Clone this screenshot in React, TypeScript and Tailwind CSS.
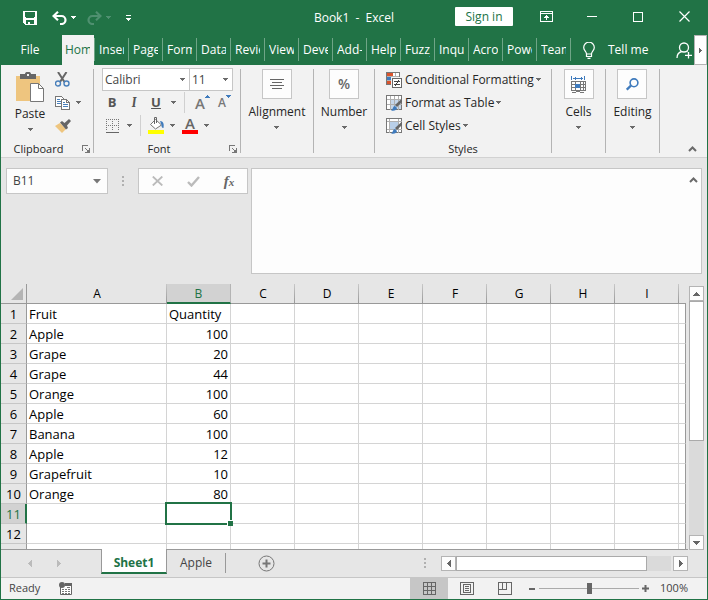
import React, { useState } from "react";

const FONT = "font-['Open_Sans','Noto_Sans',sans-serif]";

function Caret({ className = "text-[#6a6a6a]" }: { className?: string }) {
  return (
    <svg width="5" height="3" viewBox="0 0 5 3" className={`shrink-0 ${className}`} fill="currentColor" shapeRendering="crispEdges">
      <path d="M0 0h5v1H4v1H3v1H2V2H1V1H0z" />
    </svg>
  );
}

function Chevron() {
  return (
    <svg width="9" height="6" viewBox="0 0 9 6" fill="none" stroke="#6a6a6a" strokeWidth="2">
      <path d="M1 5l3.500-3.500L8 5" />
    </svg>
  );
}

function Launcher({ label }: { label: string }) {
  return (
    <button aria-label={label} className="absolute right-[3px] bottom-0">
      <svg width="8" height="8" viewBox="0 0 8 8" fill="none" stroke="#777" shapeRendering="crispEdges">
        <path d="M.5 6V.5H6M7.500 3v4.500H3M3 3l4 4" />
        <path d="M7 4v3H4z" fill="#777" stroke="none" />
      </svg>
    </button>
  );
}

/* ---------- Title bar ---------- */

function TitleBar() {
  return (
    <header className="grid h-[35px] grid-cols-[1fr_auto_1fr] items-center text-white">
      <div className="flex items-center pl-[22px]">
        <button aria-label="Save" className="mr-[15px]">
          <svg width="14" height="14" viewBox="0 0 14 14" shapeRendering="crispEdges">
            <path fillRule="evenodd" fill="#fff" d="M0 0h14v14H2l-2-2zM2 1v5h1v1h8V6h1V1zM3 9v4h2v-2h2v2h4V9z" />
          </svg>
        </button>
        <button aria-label="Undo">
          <svg width="15" height="14" viewBox="0 0 15 14" fill="none" stroke="#fff" strokeWidth="2.200">
            <path d="M6 .8L1.500 5 6 9.200M2 5h7.500a4 4 0 010 8H8" />
          </svg>
        </button>
        <button aria-label="Undo history" className="ml-1 mr-[11px]"><Caret className="text-white" /></button>
        <button aria-label="Redo">
          <svg width="15" height="14" viewBox="0 0 15 14" fill="none" stroke="#4f9070" strokeWidth="2.200">
            <path d="M9 .8L13.500 5 9 9.200M13 5H5.500a4 4 0 000 8H7" />
          </svg>
        </button>
        <button aria-label="Redo history" className="ml-1 mr-[15px]"><Caret className="text-[#4f9070]" /></button>
        <button aria-label="Customize toolbar" className="flex flex-col items-center gap-0.5">
          <span className="h-px w-[5px] bg-white" />
          <Caret className="text-white" />
        </button>
      </div>
      <h1 className="whitespace-pre text-xs">{"Book1  -  Excel"}</h1>
      <div className="flex h-full items-center justify-end pb-0.5">
        <button className="mr-[10px] h-[19px] w-[58px] rounded-[1px] bg-white text-xs leading-5 text-[#217346]">Sign in</button>
        <button aria-label="Ribbon display options" className="flex w-[46px] justify-center">
          <svg width="13" height="11" viewBox="0 0 13 11" fill="none" stroke="#fff" shapeRendering="crispEdges">
            <path d="M.5.5h12v10H.5zM.5 2.500h12M6.500 4v5" />
            <path d="M4 6h1V5h1V4h1v1h1v1h1v1H4z" fill="#fff" stroke="none" />
          </svg>
        </button>
        <button aria-label="Minimize" className="flex w-[46px] justify-center"><span className="h-px w-2.5 bg-white" /></button>
        <button aria-label="Maximize" className="flex w-[46px] justify-center"><span className="size-2.5 border border-white" /></button>
        <button aria-label="Close" className="flex w-[46px] justify-center">
          <svg width="11" height="11" viewBox="0 0 11 11" stroke="#fff" strokeWidth="1.200"><path d="M.5.5l10 10M10.500.5l-10 10" /></svg>
        </button>
      </div>
    </header>
  );
}

/* ---------- Ribbon tabs ---------- */

const TABS = ["Inser", "Page", "Form", "Data", "Revie", "View", "Deve", "Add-", "Help", "Fuzzy", "Inqu", "Acro", "Powe", "Team"];

function RibbonTabs() {
  return (
    <nav className="flex h-[30px] text-xs text-white">
      <button className="w-[61px] pr-[3px]">File</button>
      <button className="flex w-8 shrink-0 items-center bg-[#f2f2f2] px-[3px] text-[#217346]">
        <span className="w-[25px] overflow-hidden text-left">Hom</span>
      </button>
      <span className="mt-[3px] h-[23px] w-px bg-[#6fa587]" />
      {TABS.map((t) => (
        <button key={t} className="mt-[3px] flex h-[23px] w-[34px] shrink-0 items-center border-r border-[#6fa587] px-1 pt-px">
          <span className="w-[26px] overflow-hidden text-left whitespace-nowrap">{t}</span>
        </button>
      ))}
      <button className="ml-3 flex items-center gap-[13px]">
        <svg width="12" height="17" viewBox="0 0 12 17" fill="none" stroke="#fff" strokeWidth="1.200">
          <path d="M3.500 12c0-2.500-2.800-3.300-2.800-6.500a5.300 5.300 0 0110.600 0c0 3.200-2.800 4-2.800 6.500zM3.500 12v2.500h5V12M4.500 16.300h3" />
        </svg>
        <span className="whitespace-nowrap">Tell me</span>
      </button>
      <button aria-label="Share" className="mr-0.5 ml-auto">
        <svg width="16" height="17" viewBox="0 0 16 17" fill="none" stroke="#fff" strokeWidth="1.300">
          <circle cx="8" cy="5.500" r="4.500" />
          <path d="M1 16c0-3.500 2-5.800 4.800-6.500M10.500 9.300l1 .7M12.500 10v6.500M9 13.300h7" />
        </svg>
      </button>
      <button aria-label="Scroll tabs" className="flex w-[13px] items-center justify-center border border-[#b4b4b4] bg-white">
        <svg width="3" height="5" viewBox="0 0 3 5" fill="#666" shapeRendering="crispEdges"><path d="M0 0h1v1h1v1h1v1H2v1H1v1H0z" /></svg>
      </button>
    </nav>
  );
}

/* ---------- Ribbon ---------- */

const GROUP = "relative flex shrink-0 flex-col border-r border-[#b4b4b4]";
const GROUP_LABEL = "absolute inset-x-0 bottom-[-4px] h-4 text-center text-[11px] leading-4";

function BigGroup({ label, width, children }: { label: string; width: string; children: React.ReactNode }) {
  return (
    <section className={`${GROUP} ${width} items-center`}>
      <button className="flex flex-col items-center">
        <span className="flex size-[30px] items-center justify-center border border-[#c6c6c6] bg-[#fdfdfd]">{children}</span>
        <span className="mt-[5px] mb-[6px] leading-4">{label}</span>
        <Caret />
      </button>
    </section>
  );
}

function BrushOverlay() {
  return (
    <g>
      <path d="M16 3.500V7l-5 5-2-2z" fill="#666" />
      <path d="M5 15.500c2-.5 1.500-4 4-4.500l2 2c0 2-3 3.500-6 2.500z" fill="#3f7bbd" />
    </g>
  );
}

function GridBrush({ header }: { header: boolean }) {
  return (
    <svg width="17" height="16" viewBox="0 0 17 16">
      <path d="M.5.5h15v14H.5z" fill="#fff" stroke="#777" shapeRendering="crispEdges" />
      {header ? <path d="M4 4h8v7H4z" fill="#b9cfe8" /> : <path d="M4 5h11v9H4z" fill="#c5d6ea" />}
      <path d={header ? "M.5 3.500h15M.5 11.500h15M3.500.5v14M12.500.5v14" : "M.5 4.500h15M.5 9.500h15M4.500.5v14M8.500.5v14M12.500.5v14"} stroke="#b0b0b0" fill="none" shapeRendering="crispEdges" />
      <BrushOverlay />
    </svg>
  );
}

function ConditionalIcon() {
  return (
    <svg width="17" height="16" viewBox="0 0 17 16" shapeRendering="crispEdges">
      <path d="M.5.5h13v12H.5z" fill="#fff" stroke="#777" />
      <path d="M1 1h6v3H1zM1 9h4v3H1z" fill="#d9532c" />
      <path d="M1 5h8v3H1z" fill="#3f7bbd" />
      <path d="M1 4.500h12M1 8.500h12M9.500 1v6" stroke="#b0b0b0" />
      <path d="M5 5h12v11H5z" fill="#f2f2f2" />
      <path d="M6.500 6.500h9v9h-9z" fill="#fff" stroke="#666" />
      <path d="M8 9.500h6M8 12.500h6M12.500 8l-3 6" stroke="#444" />
    </svg>
  );
}

function StyleRow({ label, children }: { label: string; children: React.ReactNode }) {
  return (
    <button className="flex h-[23px] items-center whitespace-nowrap">
      {children}
      <span className="mr-0.5 ml-0.5">{label}</span>
      <Caret />
    </button>
  );
}

function Ribbon() {
  return (
    <div className="flex h-[93px] border-b border-[#d2d2d2] bg-[#f2f2f2] py-1 text-xs text-[#262626]">
      <section className={`${GROUP} w-[93px]`}>
        <div className="-mt-px flex">
          <button className="mt-1 flex w-[54px] flex-col items-center pl-1">
            <svg width="30" height="31" viewBox="0 0 30 31">
              <path d="M1 4h24v25H1z" fill="#eec57f" />
              <path d="M5 2h5c0-3 6-3 6 0h5v5H5z" fill="#666" />
              <path d="M12 2h2v2h-2z" fill="#f2f2f2" />
              <path d="M15.500 11.500h8l5 5v13h-13z" fill="#fff" stroke="#777" />
              <path d="M23.500 11.500v5h5" fill="none" stroke="#777" />
            </svg>
            <span className="mt-[3px] mb-[6px] leading-4">Paste</span>
            <Caret />
          </button>
          <div className="flex flex-col">
            <button aria-label="Cut" className="flex h-[23px] items-center">
              <svg width="15" height="15" viewBox="0 0 15 15" fill="none">
                <path d="M3 0l6.500 10M11.500 0L5 10" stroke="#666" strokeWidth="2" />
                <circle cx="3" cy="11.500" r="2.500" stroke="#4a80bb" strokeWidth="1.400" />
                <circle cx="11.500" cy="11.500" r="2.500" stroke="#4a80bb" strokeWidth="1.400" />
              </svg>
            </button>
            <button aria-label="Copy" className="flex h-[23px] items-center gap-[6px]">
              <svg width="15" height="14" viewBox="0 0 15 14" fill="#fff" stroke="#777" shapeRendering="crispEdges">
                <path d="M.5.5h6l2 2v8h-8z" />
                <path d="M2 3.500h3M2 5.500h4M2 7.500h4" stroke="#4a80bb" />
                <path d="M6.500 3.500h5l3 3v7h-8z" />
                <path d="M11.500 3.500v3h3" fill="none" />
                <path d="M8 6.500h2M8 8.500h5M8 10.500h5" stroke="#4a80bb" />
              </svg>
              <Caret />
            </button>
            <button aria-label="Format painter" className="flex h-[23px] items-center">
              <svg width="16" height="14" viewBox="0 0 16 14">
                <path d="M0 7l5-3 6 6-4 4z" fill="#eec57f" />
                <path d="M5 3.500l2-1.500 2.500 2L14 0l2 2-4 4.500L13 9l-2 1.500z" fill="#666" />
              </svg>
            </button>
          </div>
        </div>
        <h2 className={`${GROUP_LABEL} pr-[17px]`}>Clipboard</h2>
        <Launcher label="Clipboard settings" />
      </section>

      <section className={`${GROUP} w-[147px] pl-2`}>
        <div className="-mt-px flex">
          <label className="relative flex items-center">
            <select aria-label="Font" className="h-[23px] w-[88px] appearance-none border border-[#c6c6c6] bg-white pl-0.5 text-[#444]"><option>Calibri</option></select>
            <span className="pointer-events-none absolute right-[5px]"><Caret /></span>
          </label>
          <label className="relative flex items-center">
            <select aria-label="Font size" className="h-[23px] w-[43px] appearance-none border border-l-0 border-[#c6c6c6] bg-white pl-0.5 text-[#444]"><option>11</option></select>
            <span className="pointer-events-none absolute right-[5px]"><Caret /></span>
          </label>
        </div>
        <div className="flex h-[23px] items-center text-[13px] text-[#555]">
          <button aria-label="Bold" className="w-5 font-bold">B</button>
          <button aria-label="Italic" className="ml-[2px] w-5 font-serif font-bold italic">I</button>
          <button aria-label="Underline" className="w-6 font-bold underline">U</button>
          <button aria-label="Underline style" className="ml-[3px]"><Caret /></button>
          <span className="ml-2 h-[21px] w-px bg-[#d0d0d0]" />
          <button aria-label="Increase font size" className="ml-2.5 flex items-start text-[15px] leading-4 font-semibold text-[#777]">
            A<svg width="5" height="3" viewBox="0 0 5 3" fill="#3f7bbd" shapeRendering="crispEdges"><path d="M2 0h1v1h1v1h1v1H0V2h1V1h1z" /></svg>
          </button>
          <button aria-label="Decrease font size" className="ml-2 flex items-start text-[12px] leading-4 font-semibold text-[#777]">
            A<Caret className="text-[#3f7bbd]" />
          </button>
        </div>
        <div className="flex h-[23px] items-center text-[#555]">
          <button aria-label="Borders" className="ml-1">
            <svg width="13" height="14" viewBox="0 0 13 14" fill="none" stroke="#777" shapeRendering="crispEdges">
              <path d="M.5 0v12M6.500 0v12M12.500 0v12M0 .5h13M0 6.500h13" strokeDasharray="1 1" />
              <path d="M0 13h13" stroke="#666" />
            </svg>
          </button>
          <button aria-label="Border style" className="ml-2"><Caret /></button>
          <span className="ml-2 h-[21px] w-px bg-[#d0d0d0]" />
          <button aria-label="Fill color" className="ml-[7px]">
            <svg width="17" height="17" viewBox="0 0 17 17">
              <path d="M7.500 2.500l6 5.500-6 4-5-4.500z" fill="#fff" stroke="#777" />
              <path d="M6.500 7V.5h2V6" fill="none" stroke="#666" />
              <path d="M12 4c4 0 4 4 3.500 7-2 0-2-2-2-3z" fill="#3f7bbd" />
              <path d="M0 13h16v4H0z" fill="#ff0" />
            </svg>
          </button>
          <button aria-label="Fill color list" className="ml-[5px]"><Caret /></button>
          <button aria-label="Font color" className="ml-[7px] flex w-4 flex-col items-center border-b-4 border-[#f00] text-[15px] leading-[13px] font-semibold text-[#666]">A</button>
          <button aria-label="Font color list" className="ml-[6px]"><Caret /></button>
        </div>
        <h2 className={`${GROUP_LABEL} pr-4`}>Font</h2>
        <Launcher label="Font settings" />
      </section>

      <BigGroup label="Alignment" width="w-[73px]">
        <svg width="14" height="11" viewBox="0 0 14 11" stroke="#666" shapeRendering="crispEdges"><path d="M0 .5h14M2 3.500h10M0 6.500h14M2 9.500h10" /></svg>
      </BigGroup>
      <BigGroup label="Number" width="w-[61px]">
        <span className="text-sm font-semibold text-[#666]">%</span>
      </BigGroup>

      <section className={`${GROUP} w-[177px] pl-[11px]`}>
        <div className="-mt-px flex flex-col items-start">
          <StyleRow label="Conditional Formatting"><ConditionalIcon /></StyleRow>
          <StyleRow label="Format as Table"><GridBrush header={false} /></StyleRow>
          <StyleRow label="Cell Styles"><GridBrush header /></StyleRow>
        </div>
        <h2 className={GROUP_LABEL}>Styles</h2>
      </section>

      <BigGroup label="Cells" width="w-[54px]">
        <svg width="15" height="17" viewBox="0 0 15 17" fill="none" shapeRendering="crispEdges">
          <path d="M.5 0v4M13.500 0v4M2 2h10M4 .5v3M10 .5v3" stroke="#3f7bbd" />
          <path d="M.5 5.500h14v9H.5zM.5 8.500h14M.5 11.500h14M4.500 5v10M9.500 5v10M12.500 5v10" stroke="#777" />
          <path d="M4 8h5v4H4z" fill="#3f7bbd" />
          <path d="M1 16h4l2-1 2 1h4" stroke="#777" />
        </svg>
      </BigGroup>
      <BigGroup label="Editing" width="w-[54px]">
        <svg width="13" height="13" viewBox="0 0 13 13" fill="none" stroke="#3f7bbd">
          <circle cx="8" cy="4.800" r="3.900" strokeWidth="1.600" />
          <path d="M5 7.500L.8 11.700" strokeWidth="2.400" />
        </svg>
      </BigGroup>
      <button aria-label="Collapse ribbon" className="mr-2.5 mb-px ml-auto self-end"><Chevron /></button>
    </div>
  );
}

/* ---------- Formula bar ---------- */

function Dots() {
  return (
    <span className="flex flex-col gap-0.5">
      <i className="size-0.5 bg-[#b0b0b0]" />
      <i className="size-0.5 bg-[#b0b0b0]" />
      <i className="size-0.5 bg-[#b0b0b0]" />
    </span>
  );
}

function FormulaBar() {
  const [cell, setCell] = useState("B11");
  return (
    <div className="flex items-start px-[5px] py-2.5">
      <div className="flex h-[26px] w-[102px] shrink-0 items-center border border-[#c6c6c6] bg-[#fdfdfd]">
        <input aria-label="Name box" value={cell} onChange={(e) => setCell(e.target.value)} className="w-20 min-w-0 flex-1 bg-transparent pl-1.5 text-xs text-[#444] outline-none" />
        <button aria-label="Named cells" className="mr-1.5">
          <svg width="8" height="5" viewBox="0 0 8 5" fill="#777"><path d="M0 0h8L4 4.500z" /></svg>
        </button>
      </div>
      <div className="ml-[14px] flex h-[26px] items-center"><Dots /></div>
      <div className="ml-[14px] flex h-[26px] w-[110px] shrink-0 items-center border border-[#c6c6c6] bg-[#fdfdfd]">
        <button aria-label="Cancel" className="flex w-9 justify-center">
          <svg width="11" height="10" viewBox="0 0 11 10" stroke="#bbb" strokeWidth="1.800"><path d="M.8.5l9.500 9M10.300.5l-9.500 9" /></svg>
        </button>
        <button aria-label="Enter" className="flex w-9 justify-center">
          <svg width="13" height="11" viewBox="0 0 13 11" stroke="#bbb" strokeWidth="2.400" fill="none"><path d="M1 6l3.500 3.500L12 1" /></svg>
        </button>
        <button aria-label="Insert function" className="w-9 font-['Liberation_Serif',serif] text-[15px] leading-5 font-bold text-[#666] italic">
          f<span className="text-[11px]">x</span>
        </button>
      </div>
      <div className="relative ml-[3px] flex flex-1">
        <textarea aria-label="Formula" className="h-[106px] w-full resize-none border border-[#c6c6c6] bg-[#fdfdfd] p-1 pr-5 text-xs outline-none" />
        <button aria-label="Collapse formula bar" className="absolute top-[9px] right-1"><Chevron /></button>
      </div>
    </div>
  );
}

/* ---------- Sheet ---------- */

const COLUMNS = ["A", "B", "C", "D", "E", "F", "G", "H", "I", ""];
const DATA: [string, string | number][] = [
  ["Fruit", "Quantity"],
  ["Apple", 100],
  ["Grape", 20],
  ["Grape", 44],
  ["Orange", 100],
  ["Apple", 60],
  ["Banana", 100],
  ["Apple", 12],
  ["Grapefruit", 10],
  ["Orange", 80],
];

function Sheet() {
  return (
    <div className="min-w-0 flex-1 overflow-hidden">
      <table className="w-full table-fixed border-separate border-spacing-0 text-[13px] leading-[17px] text-black">
        <colgroup>
          <col className="w-[26px]" />
          <col className="w-[140px]" />
          {COLUMNS.slice(1, -1).map((c) => <col key={c} className="w-16" />)}
          <col />
        </colgroup>
        <thead>
          <tr className="h-5 text-xs">
            <td className="border-r border-b border-[#999] p-0">
              <svg width="12" height="12" viewBox="0 0 12 12" fill="#b4b4b4" className="mr-[3px] ml-auto"><path d="M12 0v12H0z" /></svg>
            </td>
            {COLUMNS.map((c) =>
              c === "B" ? (
                <th key={c} className="border-r border-b-2 border-r-[#b4b4b4] border-b-[#217346] bg-[#d2d2d2] p-0 pt-px leading-[17px] font-normal text-[#217346]">{c}</th>
              ) : (
                <th key={c} className={`border-b border-[#999] p-0 font-normal ${c ? "bg-linear-to-b from-[#c8c8c8] to-[#999] bg-[length:1px_100%] bg-right bg-no-repeat" : ""}`}>{c}</th>
              )
            )}
          </tr>
        </thead>
        <tbody>
          {Array.from({ length: 13 }, (_, i) => i + 1).map((row) => (
            <tr key={row} className="h-5">
              <th className={row === 11
                ? "border-r-2 border-b border-r-[#217346] border-b-[#c6c6c6] bg-[#d2d2d2] p-0 pt-0.5 pl-px font-normal text-[#217346]"
                : "border-r border-b border-r-[#999] border-b-[#c6c6c6] bg-[#e6e6e6] p-0 pt-0.5 font-normal"}>{row <= 12 ? row : ""}</th>
              {COLUMNS.map((c, ci) => {
                const value = ci < 2 && DATA[row - 1] ? DATA[row - 1][ci] : "";
                return (
                  <td key={c} className={`border-r border-b border-b-[#d4d4d4] bg-white px-0.5 pt-0.5 pb-0 ${c ? "border-r-[#d4d4d4]" : "border-r-[#999]"} ${typeof value === "number" ? "text-right" : ""} ${row === 11 && c === "B" ? "relative" : ""}`}>
                    {value}
                    {row === 11 && c === "B" && (
                      <span className="absolute -inset-0.5 border-2 border-[#217346]">
                        <i className="absolute -right-[3px] -bottom-[3px] size-1.5 border-t border-l border-white bg-[#217346]" />
                      </span>
                    )}
                  </td>
                );
              })}
            </tr>
          ))}
        </tbody>
      </table>
    </div>
  );
}

const SCROLL_BUTTON = "flex size-[15px] shrink-0 items-center justify-center border border-[#b4b4b4] bg-[#fdfdfd]";

function VerticalScroll() {
  return (
    <div className="z-10 mx-[3px] mt-0.5 -mb-px flex w-[15px] flex-col bg-[#dadada]">
      <button aria-label="Scroll up" className={SCROLL_BUTTON}>
        <svg width="7" height="4" viewBox="0 0 7 4" fill="#666" shapeRendering="crispEdges"><path d="M3 0h1v1h1v1h1v1h1v1H0V3h1V2h1V1h1z" /></svg>
      </button>
      <div className="h-[140px] border border-[#aaa] bg-white" />
      <button aria-label="Scroll down" className={`${SCROLL_BUTTON} mt-auto`}>
        <svg width="7" height="4" viewBox="0 0 7 4" fill="#666" shapeRendering="crispEdges"><path d="M0 0h7v1H6v1H5v1H4v1H3V3H2V2H1V1H0z" /></svg>
      </button>
    </div>
  );
}

function Triangle({ left, color }: { left?: boolean; color: string }) {
  return (
    <svg viewBox="0 0 4 7" className={`h-[7px] w-1 ${color}`} fill="currentColor" shapeRendering="crispEdges">
      <path d={left ? "M4 0v7H3V6H2V5H1V4H0V3h1V2h1V1h1V0z" : "M0 0v7h1V6h1V5h1V4h1V3H3V2H2V1H1V0z"} />
    </svg>
  );
}

function SheetTabs() {
  return (
    <div className="flex h-[29px] border-b border-[#c6c6c6] pr-[19px] text-xs">
      <div className="flex w-[100px] items-center gap-[25px] border-t border-[#999] pl-[27px]">
        <button aria-label="Previous sheet"><Triangle left color="text-[#bbb]" /></button>
        <button aria-label="Next sheet"><Triangle color="text-[#bbb]" /></button>
      </div>
      <button className="h-[25px] w-[66px] shrink-0 border-x border-b-2 border-x-[#999] border-b-[#217346] bg-white pt-1 font-bold text-[#217346]">Sheet1</button>
      <div className="flex min-w-0 flex-1 items-start border-t border-[#999]">
        <button className="mt-[3px] h-5 w-[59px] border-r border-[#999] text-[#444]">Apple</button>
        <button aria-label="New sheet" className="mt-[5px] ml-8">
          <svg width="17" height="17" viewBox="0 0 17 17" fill="none" stroke="#777">
            <circle cx="8.500" cy="8.500" r="7.500" />
            <path d="M8.500 4.500v8M4.500 8.500h8" strokeWidth="2" />
          </svg>
        </button>
        <div className="mt-2 mr-[15px] ml-auto"><Dots /></div>
        <div className="mt-[6px] flex w-[247px]">
          <button aria-label="Scroll left" className={SCROLL_BUTTON}><Triangle left color="text-[#666]" /></button>
          <div className="mr-0.5 flex-1 bg-[#dadada]"><div className="h-[15px] w-[191px] border border-[#aaa] bg-white" /></div>
          <button aria-label="Scroll right" className={SCROLL_BUTTON}><Triangle color="text-[#666]" /></button>
        </div>
      </div>
    </div>
  );
}

/* ---------- Status bar ---------- */

function StatusBar() {
  const [zoom, setZoom] = useState(50);
  return (
    <footer className="flex h-[21px] items-center bg-[#f2f2f2] pr-[19px] pl-2 text-[11px] text-[#444]">
      <span>Ready</span>
      <button aria-label="Record macro" className="ml-[19px]">
        <svg width="14" height="14" viewBox="0 0 14 14">
          <path d="M1.500 5v7.500h11V2" fill="#fff" stroke="#666" />
          <path d="M6 1h7v3H6z" fill="#666" />
          <circle cx="3" cy="3" r="3" fill="#666" />
          <path d="M3 7.500h2M6 7.500h2M9 7.500h2M3 9.500h2M6 9.500h2M9 9.500h2M3 11.500h2M6 11.500h2M9 11.500h2M8 5.500h3" stroke="#777" />
        </svg>
      </button>
      <div className="ml-auto flex h-full">
        <button aria-label="Normal view" className="flex w-[38px] items-center justify-center bg-[#c6c6c6]">
          <svg width="13" height="13" viewBox="0 0 13 13" fill="none" stroke="#666" shapeRendering="crispEdges"><path d="M.5.5h12v12H.5zM4.500.5v12M8.500.5v12M.5 4.500h12M.5 8.500h12" /></svg>
        </button>
        <button aria-label="Page layout view" className="flex w-[38px] items-center justify-center">
          <svg width="14" height="13" viewBox="0 0 14 13" fill="none" stroke="#666" shapeRendering="crispEdges"><path d="M.5.5h13v12H.5zM3.500 2.500h7v8h-7zM5 4.500h4M5 6.500h4M5 8.500h4" /></svg>
        </button>
        <button aria-label="Page break view" className="flex w-[38px] items-center justify-center">
          <svg width="14" height="13" viewBox="0 0 14 13" fill="none" stroke="#666" shapeRendering="crispEdges"><path d="M.5.5h13v12H.5zM4.500.5v7M8.500.5v7M.5 7.500h8" /></svg>
        </button>
      </div>
      <button aria-label="Zoom out" className="ml-[5px] h-0.5 w-1.5 bg-[#666]" />
      <input type="range" aria-label="Zoom" value={zoom} onChange={(e) => setZoom(Number(e.target.value))}
        className="mr-[3px] ml-1 h-3 w-[100px] appearance-none bg-linear-to-r from-[#aaa] to-[#aaa] bg-[length:100%_1px] bg-center bg-no-repeat [&::-webkit-slider-thumb]:h-[11px] [&::-webkit-slider-thumb]:w-[5px] [&::-webkit-slider-thumb]:appearance-none [&::-webkit-slider-thumb]:bg-[#666]" />
      <button aria-label="Zoom in">
        <svg width="7" height="7" viewBox="0 0 7 7" stroke="#666" strokeWidth="2"><path d="M3.500 0v7M0 3.500h7" /></svg>
      </button>
      <span className="ml-[11px] w-7 text-right">100%</span>
    </footer>
  );
}

export default function App() {
  return (
    <div className={`flex h-screen flex-col overflow-hidden border-x border-b border-[#217346] bg-[#e6e6e6] ${FONT}`}>
      <div className="bg-[#217346]">
        <TitleBar />
        <RibbonTabs />
      </div>
      <Ribbon />
      <FormulaBar />
      <div className="flex min-h-0 flex-1">
        <Sheet />
        <VerticalScroll />
      </div>
      <SheetTabs />
      <StatusBar />
    </div>
  );
}
